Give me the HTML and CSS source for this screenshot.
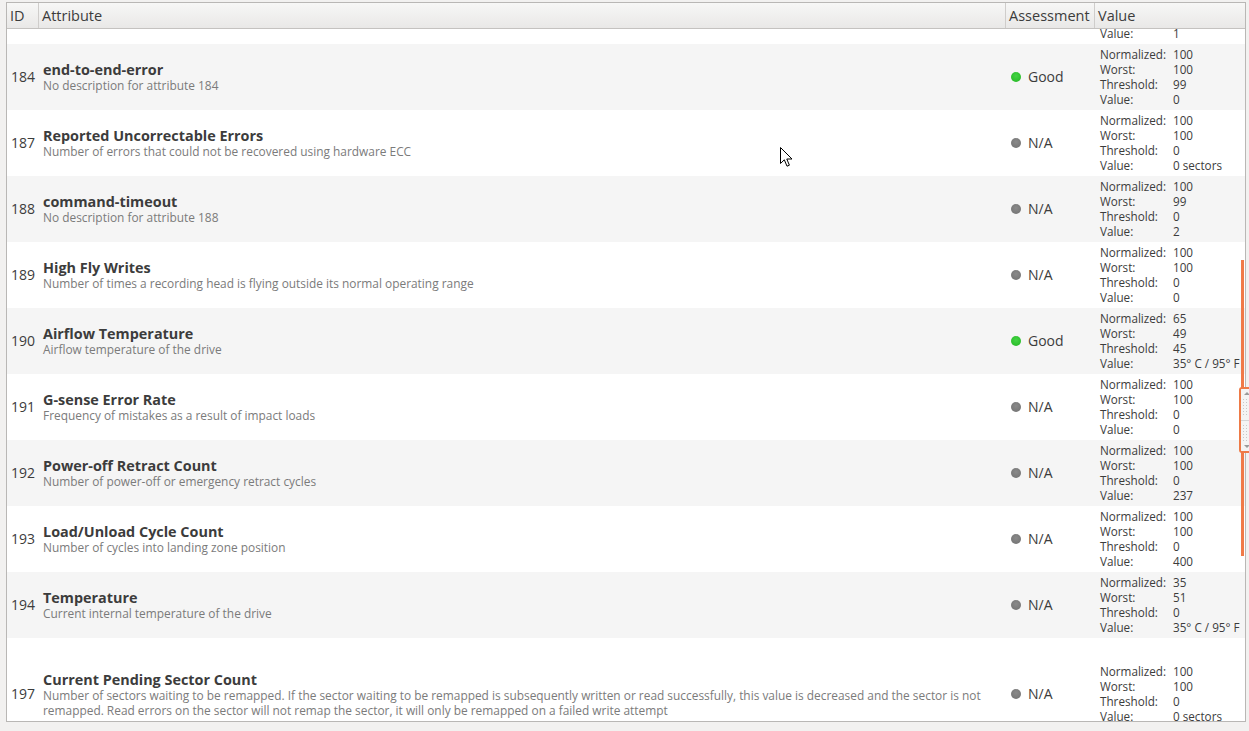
FILE: index.html
```html
<!DOCTYPE html>
<html>
<head>
<meta charset="utf-8">
<link rel="stylesheet" href="styles.css">
</head>
<body>
<div class="frame">
  <div class="head">
    <div class="hc">ID</div>
    <div class="hc">Attribute</div>
    <div class="hc">Assessment</div>
    <div class="hc last">Value</div>
  </div>
  <div class="rows">
    <div class="row cut">
      <div></div><div></div><div></div>
      <div class="vals"><span>Value:</span><span>1</span></div>
    </div>

    <div class="row alt">
      <div class="id">184</div>
      <div class="attr"><div class="name">end-to-end-error</div><div class="desc">No description for attribute 184</div></div>
      <div class="asm"><span class="dot good"></span>Good</div>
      <div class="vals"><span>Normalized:</span><span>100</span><span>Worst:</span><span>100</span><span>Threshold:</span><span>99</span><span>Value:</span><span>0</span></div>
    </div>

    <div class="row">
      <div class="id">187</div>
      <div class="attr"><div class="name">Reported Uncorrectable Errors</div><div class="desc">Number of errors that could not be recovered using hardware ECC</div></div>
      <div class="asm"><span class="dot na"></span>N/A</div>
      <div class="vals"><span>Normalized:</span><span>100</span><span>Worst:</span><span>100</span><span>Threshold:</span><span>0</span><span>Value:</span><span>0 sectors</span></div>
    </div>

    <div class="row alt">
      <div class="id">188</div>
      <div class="attr"><div class="name">command-timeout</div><div class="desc">No description for attribute 188</div></div>
      <div class="asm"><span class="dot na"></span>N/A</div>
      <div class="vals"><span>Normalized:</span><span>100</span><span>Worst:</span><span>99</span><span>Threshold:</span><span>0</span><span>Value:</span><span>2</span></div>
    </div>

    <div class="row">
      <div class="id">189</div>
      <div class="attr"><div class="name">High Fly Writes</div><div class="desc">Number of times a recording head is flying outside its normal operating range</div></div>
      <div class="asm"><span class="dot na"></span>N/A</div>
      <div class="vals"><span>Normalized:</span><span>100</span><span>Worst:</span><span>100</span><span>Threshold:</span><span>0</span><span>Value:</span><span>0</span></div>
    </div>

    <div class="row alt">
      <div class="id">190</div>
      <div class="attr"><div class="name">Airflow Temperature</div><div class="desc">Airflow temperature of the drive</div></div>
      <div class="asm"><span class="dot good"></span>Good</div>
      <div class="vals"><span>Normalized:</span><span>65</span><span>Worst:</span><span>49</span><span>Threshold:</span><span>45</span><span>Value:</span><span>35° C / 95° F</span></div>
    </div>

    <div class="row">
      <div class="id">191</div>
      <div class="attr"><div class="name">G-sense Error Rate</div><div class="desc">Frequency of mistakes as a result of impact loads</div></div>
      <div class="asm"><span class="dot na"></span>N/A</div>
      <div class="vals"><span>Normalized:</span><span>100</span><span>Worst:</span><span>100</span><span>Threshold:</span><span>0</span><span>Value:</span><span>0</span></div>
    </div>

    <div class="row alt">
      <div class="id">192</div>
      <div class="attr"><div class="name">Power-off Retract Count</div><div class="desc">Number of power-off or emergency retract cycles</div></div>
      <div class="asm"><span class="dot na"></span>N/A</div>
      <div class="vals"><span>Normalized:</span><span>100</span><span>Worst:</span><span>100</span><span>Threshold:</span><span>0</span><span>Value:</span><span>237</span></div>
    </div>

    <div class="row">
      <div class="id">193</div>
      <div class="attr"><div class="name">Load/Unload Cycle Count</div><div class="desc">Number of cycles into landing zone position</div></div>
      <div class="asm"><span class="dot na"></span>N/A</div>
      <div class="vals"><span>Normalized:</span><span>100</span><span>Worst:</span><span>100</span><span>Threshold:</span><span>0</span><span>Value:</span><span>400</span></div>
    </div>

    <div class="row alt">
      <div class="id">194</div>
      <div class="attr"><div class="name">Temperature</div><div class="desc">Current internal temperature of the drive</div></div>
      <div class="asm"><span class="dot na"></span>N/A</div>
      <div class="vals"><span>Normalized:</span><span>35</span><span>Worst:</span><span>51</span><span>Threshold:</span><span>0</span><span>Value:</span><span>35° C / 95° F</span></div>
    </div>

    <div class="row tall">
      <div class="id">197</div>
      <div class="attr"><div class="name">Current Pending Sector Count</div><div class="desc">Number of sectors waiting to be remapped. If the sector waiting to be remapped is subsequently written or read successfully, this value is decreased and the sector is not<br>remapped. Read errors on the sector will not remap the sector, it will only be remapped on a failed write attempt</div></div>
      <div class="asm"><span class="dot na"></span>N/A</div>
      <div class="vals"><span>Normalized:</span><span>100</span><span>Worst:</span><span>100</span><span>Threshold:</span><span>0</span><span>Value:</span><span>0 sectors</span></div>
    </div>
  </div>
</div>

<div class="sb-track"></div>
<div class="sb-thumb">
  <svg width="10" height="62" viewBox="0 0 10 62">
    <rect x="0" y="0" width="10" height="62" fill="#f4f4f4"/>
    <path d="M3 6 L6 3 L9 6 Z" fill="#9a9a9a"/>
    <g fill="#c8c8c8">
      <rect x="2" y="10" width="1" height="1"/><rect x="5" y="10" width="1" height="1"/>
      <rect x="2" y="13" width="1" height="1"/><rect x="5" y="13" width="1" height="1"/>
      <rect x="2" y="16" width="1" height="1"/><rect x="5" y="16" width="1" height="1"/>
      <rect x="2" y="19" width="1" height="1"/><rect x="5" y="19" width="1" height="1"/>
      <rect x="2" y="22" width="1" height="1"/><rect x="5" y="22" width="1" height="1"/>
      <rect x="2" y="25" width="1" height="1"/><rect x="5" y="25" width="1" height="1"/>
      <rect x="2" y="36" width="1" height="1"/><rect x="5" y="36" width="1" height="1"/>
      <rect x="2" y="39" width="1" height="1"/><rect x="5" y="39" width="1" height="1"/>
      <rect x="2" y="42" width="1" height="1"/><rect x="5" y="42" width="1" height="1"/>
      <rect x="2" y="45" width="1" height="1"/><rect x="5" y="45" width="1" height="1"/>
      <rect x="2" y="48" width="1" height="1"/><rect x="5" y="48" width="1" height="1"/>
      <rect x="2" y="51" width="1" height="1"/><rect x="5" y="51" width="1" height="1"/>
    </g>
    <rect x="0" y="31" width="10" height="1" fill="#d6d6d6"/>
    <path d="M3 56 L9 56 L6 59 Z" fill="#9a9a9a"/>
  </svg>
</div>

<svg class="cursor" width="13" height="21" viewBox="0 0 13 21">
  <path d="M0.5 0.5 L0.5 16.5 L4.3 12.8 L7 19.2 L9.4 18.2 L6.8 12 L12 12 Z" fill="#fff" stroke="#000" stroke-width="1" stroke-linejoin="miter"/>
</svg>
</body>
</html>
```

FILE: styles.css
```css
html, body {
  margin: 0;
  padding: 0;
}
body {
  width: 1249px;
  height: 731px;
  overflow: hidden;
  background: #f2f1f0;
  font-family: "Open Sans", "Noto Sans", sans-serif;
  color: #3c3c3c;
  position: relative;
}
.frame {
  margin: 2px 0 0 6px;
  width: 1240px;
  height: 720px;
  box-sizing: border-box;
  border: 1px solid #b9b7b5;
  background: #ffffff;
  overflow: hidden;
  display: flex;
  flex-direction: column;
}
.head {
  display: grid;
  grid-template-columns: 32px 967px 89px 1fr;
  height: 25px;
  border-bottom: 1px solid #c4c2c0;
  background: linear-gradient(#f7f7f6, #e9e8e7);
  flex: none;
}
.hc {
  border-right: 1px solid #cfcdcb;
  padding-left: 3px;
  font-size: 14.5px;
  line-height: 25px;
  white-space: nowrap;
  overflow: hidden;
}
.hc.last {
  border-right: none;
}
.rows {
  flex: 1;
  overflow: hidden;
}
.row {
  display: grid;
  grid-template-columns: 32px 967px 89px 1fr;
  align-items: center;
  height: 66px;
  background: #ffffff;
}
.row.alt {
  background: #f5f5f5;
}
.row.cut {
  height: 15px;
  align-items: start;
  overflow: hidden;
}
.row.cut .vals {
  margin-top: -3px;
}
.row.tall {
  height: 112px;
}
.id {
  padding-left: 4px;
  font-size: 14px;
  line-height: 16px;
}
.attr {
  padding-left: 4px;
  white-space: nowrap;
}
.name {
  font-weight: 700;
  font-size: 14.4px;
  line-height: 17px;
}
.desc {
  font-size: 11.9px;
  line-height: 15px;
  color: #7b7b7b;
}
.asm {
  display: flex;
  align-items: center;
  gap: 7px;
  padding-left: 5px;
  font-size: 14px;
  line-height: 16px;
}
.dot {
  width: 10px;
  height: 10px;
  border-radius: 50%;
  flex: none;
}
.dot.good {
  background: radial-gradient(circle at 50% 40%, #44d444, #22b522);
}
.dot.na {
  background: radial-gradient(circle at 50% 40%, #8a8a8a, #707070);
}
.vals {
  display: grid;
  grid-template-columns: 73px auto;
  padding-left: 5px;
  font-size: 11.7px;
  line-height: 15px;
  white-space: nowrap;
}
.sb-track {
  position: absolute;
  left: 1241px;
  top: 260px;
  width: 3px;
  height: 296px;
  background: #f07a48;
}
.sb-thumb {
  position: absolute;
  left: 1239px;
  top: 387px;
  width: 14px;
  height: 66px;
  box-sizing: border-box;
  border: 2px solid #ee7a46;
  border-radius: 3px;
  background: #f4f4f4;
  overflow: hidden;
}
.sb-thumb svg {
  display: block;
}
.cursor {
  position: absolute;
  left: 780px;
  top: 147px;
}
```
